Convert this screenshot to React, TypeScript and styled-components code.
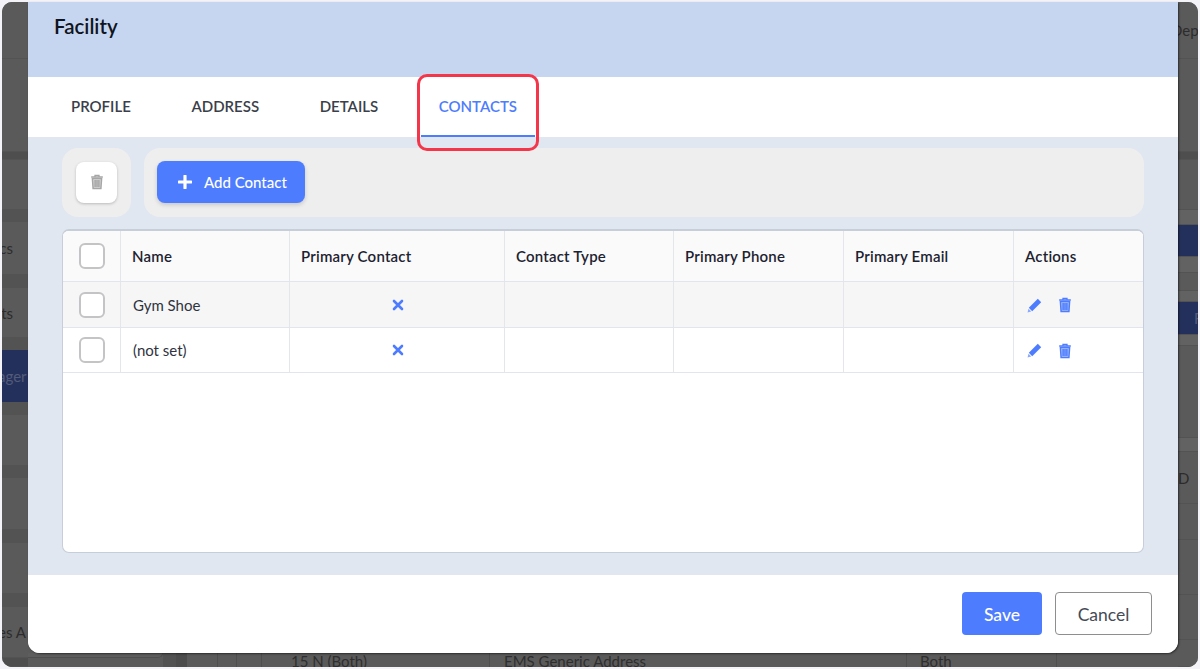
import { createGlobalStyle } from 'styled-components';
import styled from 'styled-components';

const columns = '58px 169px 215px 169px 170px 170px 1fr';

const contacts = [
  { id: '1', name: 'Gym Shoe' },
  { id: '2', name: '(not set)' },
];

const sideRows = [
  { id: 'a', height: 57, label: '', tone: 'plain', inset: 0 },
  { id: 'b', height: 93, label: '', tone: 'plain', inset: 0 },
  { id: 'c', height: 8, label: '', tone: 'dark', inset: 0 },
  { id: 'd', height: 50, label: '', tone: 'plain', inset: 0 },
  { id: 'e', height: 12, label: '', tone: 'band', inset: 0 },
  { id: 'f', height: 53, label: 'ics', tone: 'plain', inset: 21 },
  { id: 'g', height: 13, label: '', tone: 'band', inset: 0 },
  { id: 'h', height: 50, label: 'ts', tone: 'plain', inset: 21 },
  { id: 'i', height: 12, label: '', tone: 'band', inset: 0 },
  { id: 'j', height: 53, label: 'ager', tone: 'navy', inset: 4 },
  { id: 'k', height: 12, label: '', tone: 'band', inset: 0 },
  { id: 'l', height: 51, label: '', tone: 'plain', inset: 0 },
  { id: 'm', height: 12, label: '', tone: 'band', inset: 0 },
  { id: 'n', height: 52, label: '', tone: 'plain', inset: 0 },
  { id: 'o', height: 13, label: '', tone: 'band', inset: 0 },
  { id: 'p', height: 51, label: '', tone: 'plain', inset: 0 },
  { id: 'q', height: 13, label: '', tone: 'band', inset: 0 },
  { id: 'r', height: 51, label: 'es A', tone: 'plain', inset: 4 },
  { id: 's', height: 9, label: '', tone: 'dark', inset: 0 },
];

const rightRows = [
  { id: 'a', height: 57, label: 'Dep', tone: 'plain', inset: 5 },
  { id: 'b', height: 93, label: '', tone: 'plain', inset: 0 },
  { id: 'c', height: 8, label: '', tone: 'dark', inset: 0 },
  { id: 'd', height: 50, label: '', tone: 'plain', inset: 0 },
  { id: 'e', height: 15, label: '', tone: 'mid', inset: 0 },
  { id: 'f', height: 32, label: '', tone: 'navy', inset: 0 },
  { id: 'g', height: 16, label: '', tone: 'mid', inset: 0 },
  { id: 'h', height: 18, label: '', tone: 'plain', inset: 0 },
  { id: 'i', height: 11, label: '', tone: 'mid', inset: 0 },
  { id: 'j', height: 33, label: 'F', tone: 'navy', inset: 28 },
  { id: 'k', height: 11, label: '', tone: 'mid', inset: 0 },
  { id: 'l', height: 92, label: '', tone: 'plain', inset: 0 },
  { id: 'm', height: 14, label: '', tone: 'mid', inset: 0 },
  { id: 'n', height: 52, label: 'D', tone: 'plain', inset: 12 },
  { id: 'o', height: 36, label: '', tone: 'plain', inset: 0 },
  { id: 'p', height: 55, label: '', tone: 'plain', inset: 0 },
  { id: 'q', height: 45, label: '', tone: 'plain', inset: 0 },
  { id: 'r', height: 27, label: '', tone: 'plain', inset: 0 },
];

const peekCells = [
  { id: 'a', width: 31, label: '', inset: 0 },
  { id: 'b', width: 19, label: '', inset: 0 },
  { id: 'c', width: 25, label: '', inset: 0 },
  { id: 'd', width: 228, label: '15 N (Both)', inset: 29 },
  { id: 'e', width: 417, label: 'EMS Generic Address', inset: 14 },
  { id: 'f', width: 150, label: 'Both', inset: 13 },
];

const toneColors: Record<string, string> = {
  plain: '#5a5a5a',
  mid: '#626262',
  band: '#535353',
  dark: '#4e4e4e',
  navy: '#24305c',
};

const GlobalStyle = createGlobalStyle`
  html, body {
    margin: 0;
    padding: 0;
    background: #f3f3f8;
  }
  * {
    box-sizing: border-box;
  }
`;

const Stage = styled.div`
  position: relative;
  width: 1200px;
  height: 669px;
  padding: 2px;
  overflow: hidden;
  font-family: Lato, 'Open Sans', sans-serif;
`;

const Backdrop = styled.div`
  display: flex;
  justify-content: space-between;
  height: 665px;
  border-radius: 10px;
  overflow: hidden;
  background: #5a5a5a;
`;

const SideStrip = styled.div`
  display: flex;
  flex-direction: column;
  width: 32px;
  overflow: hidden;
`;

const LeftStrip = styled(SideStrip)`
  width: 26px;
`;

const StripRow = styled.div<{ $tone: string; $height: number }>`
  flex: none;
  display: flex;
  align-items: center;
  height: ${({ $height }) => $height}px;
  background: ${({ $tone }) => toneColors[$tone]};
  border-bottom: 1px solid #535353;
  color: ${({ $tone }) => ($tone === 'navy' ? '#525b78' : '#2c2c2c')};
  font-size: 15px;
  white-space: nowrap;
  overflow: hidden;
`;

const LeftRow = styled(StripRow)<{ $inset: number }>`
  justify-content: ${({ $inset }) => ($inset > 10 ? 'flex-end' : 'flex-start')};
  padding-right: ${({ $inset }) => ($inset > 10 ? 15 : 0)}px;
  margin-left: ${({ $inset }) => ($inset > 0 && $inset <= 10 ? -$inset : 0)}px;
`;

const RightRow = styled(StripRow)<{ $inset: number }>`
  padding-left: ${({ $inset }) => $inset}px;
`;

const BottomPeek = styled.div`
  position: absolute;
  left: 28px;
  top: 653px;
  width: 1150px;
  height: 14px;
  display: flex;
  overflow: hidden;
  background: #5a5a5a;
`;

const PeekPanel = styled.div`
  flex: none;
  width: 135px;
  height: 5px;
  background: #5d5d5d;
  border-right: 1px solid #4e4e4e;
  border-bottom: 1px solid #4e4e4e;
  border-radius: 0 0 6px 0;
`;

const PeekGutter = styled.div`
  flex: none;
  width: 13px;
  background: #525252;
`;

const PeekRail = styled.div`
  flex: none;
  width: 11px;
  background: #4c4c4c;
`;

const PeekCell = styled.div<{ $width: number; $inset: number }>`
  flex: none;
  width: ${({ $width }) => $width}px;
  padding-left: ${({ $inset }) => $inset}px;
  border-right: 1px solid #4e4e4e;
  color: #2e2e2e;
  font-size: 15px;
  line-height: 16px;
  white-space: nowrap;
`;

const Modal = styled.div`
  position: absolute;
  left: 28px;
  top: 2px;
  width: 1150px;
  height: 651px;
  display: flex;
  flex-direction: column;
  background: #fff;
  border-radius: 0 0 12px 12px;
  box-shadow: 1px 1px 2px rgba(0, 0, 0, 0.5);
  overflow: hidden;
`;

const ModalHeader = styled.div`
  height: 75px;
  flex: none;
  padding: 12px 26px;
  background: #c6d6f0;
  color: #0f1420;
  font-size: 20.5px;
  line-height: 24px;
  font-weight: 600;
`;

const TabBar = styled.div`
  height: 60px;
  flex: none;
  display: flex;
  padding-left: 25px;
  background: #fff;
`;

const Tab = styled.div<{ $active?: boolean }>`
  height: 60px;
  display: flex;
  align-items: center;
  padding: 0 18px;
  margin-right: 24.6px;
  color: ${({ $active }) => ($active ? '#4d7cfe' : '#3a3f4a')};
  border-bottom: 2px solid ${({ $active }) => ($active ? '#4d7cfe' : 'transparent')};
  font-size: 15px;
  font-weight: 600;
`;

const Highlight = styled.div`
  position: absolute;
  left: 417px;
  top: 74px;
  width: 122px;
  height: 77px;
  border: 3px solid #f4364a;
  border-radius: 10px;
  pointer-events: none;
`;

const Body = styled.div`
  flex: 1;
  display: flex;
  flex-direction: column;
  gap: 12px;
  padding: 11px 34px 22px;
  background: #e1e7f0;
`;

const Toolbars = styled.div`
  display: flex;
  gap: 13px;
`;

const ToolGroup = styled.div<{ $grow?: boolean }>`
  height: 69px;
  display: flex;
  align-items: center;
  flex: ${({ $grow }) => ($grow ? 1 : 'none')};
  padding: 0 13px 1px;
  background: #eeeeee;
  border-radius: 16px;
`;

const TrashGroup = styled(ToolGroup)`
  padding: 0 14px 1px;
`;

const IconButton = styled.button`
  width: 41px;
  height: 41px;
  display: flex;
  align-items: center;
  justify-content: center;
  padding: 0;
  border: none;
  border-radius: 8px;
  background: #fff;
  box-shadow: 0 1px 3px rgba(0, 0, 0, 0.22);
`;

const AddButton = styled.button`
  width: 148px;
  height: 42px;
  display: flex;
  align-items: center;
  gap: 12px;
  padding: 0 0 0 21px;
  border: none;
  border-radius: 8px;
  background: #4d7cfe;
  color: #fff;
  font-family: inherit;
  font-size: 15px;
  font-weight: 500;
  box-shadow: 0 2px 4px rgba(0, 0, 0, 0.16);
`;

const Table = styled.div`
  flex: 1;
  background: #fff;
  border: 1px solid #c6ced9;
  border-top-width: 2px;
  border-radius: 7px;
  overflow: hidden;
`;

const rowHeights = { head: 51, odd: 46, even: 45 };

const Row = styled.div<{ $kind: 'head' | 'odd' | 'even' }>`
  display: grid;
  grid-template-columns: ${columns};
  height: ${({ $kind }) => rowHeights[$kind]}px;
  background: ${({ $kind }) =>
    $kind === 'head' ? '#fafafa' : $kind === 'odd' ? '#f6f6f6' : '#fff'};
  border-bottom: 1px solid #e2e5ee;
`;

const Cell = styled.div<{ $head?: boolean; $center?: boolean }>`
  display: flex;
  align-items: center;
  justify-content: ${({ $center }) => ($center ? 'center' : 'flex-start')};
  padding: ${({ $center }) => ($center ? '0 10px 0 12px' : '0 11px')};
  border-right: 1px solid #e4e6ea;
  color: ${({ $head }) => ($head ? '#1d2230' : '#2f3340')};
  font-size: 15px;
  font-weight: ${({ $head }) => ($head ? 600 : 400)};
  letter-spacing: ${({ $head }) => ($head ? '0.2px' : '0')};

  &:last-child {
    border-right: none;
  }
`;

const CheckCell = styled(Cell)`
  justify-content: center;
  padding: 0 0 0 1px;
`;

const NameCell = styled(Cell)<{ $head?: boolean }>`
  padding-left: ${({ $head }) => ($head ? 11 : 12)}px;
`;

const ActionGroup = styled.div`
  display: flex;
  align-items: center;
  gap: 15px;
  padding: 1px 0 0 2px;
`;

const Check = styled.span`
  width: 26px;
  height: 26px;
  background: #fff;
  border: 2px solid #c4c4c6;
  border-radius: 6px;
`;

const Footer = styled.div`
  height: 78px;
  flex: none;
  display: flex;
  justify-content: flex-end;
  align-items: center;
  gap: 13px;
  padding: 0 26px 1px 0;
  background: #fff;
`;

const SaveButton = styled.button`
  width: 80px;
  height: 43px;
  padding: 2px 0 0;
  border: none;
  border-radius: 4px;
  background: #4d7cfe;
  color: #fff;
  font-family: inherit;
  font-size: 17.5px;
  font-weight: 500;
`;

const CancelButton = styled.button`
  width: 97px;
  height: 43px;
  padding: 2px 0 0;
  border: 1px solid #8e8e8e;
  border-radius: 4px;
  background: #fff;
  color: #454b57;
  font-family: inherit;
  font-size: 17.5px;
`;

const TrashIcon = ({ color }: { color: string }) => (
  <svg width="16" height="16" viewBox="0 0 16 16" fill="none">
    <path d="M2.2 3h11.6M6 3V1.4h4V3" stroke={color} strokeWidth="1.3" />
    <path
      d="M3.4 4.4h9.2l-.7 10.2H4.1zM6.1 6v7M8 6v7M9.9 6v7"
      stroke={color}
      strokeWidth="1.5"
      fill={color}
      fillOpacity="0.45"
    />
  </svg>
);

const PencilIcon = () => (
  <svg width="15" height="15" viewBox="0 0 15 15">
    <path d="M10.8 0.8l3.4 3.4-9 9-3.4-3.4z" fill="#4d7cfe" />
    <path d="M1.4 10.8l2.8 2.8-3.6.8z" fill="#8ba8fd" />
  </svg>
);

const CrossIcon = () => (
  <svg width="12" height="12" viewBox="0 0 12 12">
    <path d="M2 2l8 8M10 2l-8 8" stroke="#4d7cfe" strokeWidth="2.6" strokeLinecap="round" />
  </svg>
);

const PlusIcon = () => (
  <svg width="14" height="14" viewBox="0 0 14 14">
    <path d="M7 1v12M1 7h12" stroke="#fff" strokeWidth="3.2" strokeLinecap="round" />
  </svg>
);

const App = () => {
  return (
    <>
      <GlobalStyle />
      <Stage>
        <Backdrop>
          <LeftStrip>
            {sideRows.map((row) => (
              <LeftRow key={row.id} $tone={row.tone} $height={row.height} $inset={row.inset}>
                {row.label}
              </LeftRow>
            ))}
          </LeftStrip>
          <SideStrip>
            {rightRows.map((row) => (
              <RightRow key={row.id} $tone={row.tone} $height={row.height} $inset={row.inset}>
                {row.label}
              </RightRow>
            ))}
          </SideStrip>
        </Backdrop>
        <BottomPeek>
          <PeekPanel />
          <PeekGutter />
          <PeekRail />
          {peekCells.map((cell) => (
            <PeekCell key={cell.id} $width={cell.width} $inset={cell.inset}>
              {cell.label}
            </PeekCell>
          ))}
        </BottomPeek>
        <Modal>
          <ModalHeader>Facility</ModalHeader>
          <TabBar>
            <Tab>PROFILE</Tab>
            <Tab>ADDRESS</Tab>
            <Tab>DETAILS</Tab>
            <Tab $active>CONTACTS</Tab>
          </TabBar>
          <Body>
            <Toolbars>
              <TrashGroup>
                <IconButton aria-label="Delete">
                  <TrashIcon color="#a6a6a6" />
                </IconButton>
              </TrashGroup>
              <ToolGroup $grow>
                <AddButton>
                  <PlusIcon />
                  Add Contact
                </AddButton>
              </ToolGroup>
            </Toolbars>
            <Table>
              <Row $kind="head">
                <CheckCell $head>
                  <Check />
                </CheckCell>
                <NameCell $head>Name</NameCell>
                <Cell $head>Primary Contact</Cell>
                <Cell $head>Contact Type</Cell>
                <Cell $head>Primary Phone</Cell>
                <Cell $head>Primary Email</Cell>
                <Cell $head>Actions</Cell>
              </Row>
              {contacts.map((contact, index) => (
                <Row key={contact.id} $kind={index % 2 === 0 ? 'odd' : 'even'}>
                  <CheckCell>
                    <Check />
                  </CheckCell>
                  <NameCell>{contact.name}</NameCell>
                  <Cell $center>
                    <CrossIcon />
                  </Cell>
                  <Cell />
                  <Cell />
                  <Cell />
                  <Cell>
                    <ActionGroup>
                      <PencilIcon />
                      <TrashIcon color="#4d7cfe" />
                    </ActionGroup>
                  </Cell>
                </Row>
              ))}
            </Table>
          </Body>
          <Footer>
            <SaveButton>Save</SaveButton>
            <CancelButton>Cancel</CancelButton>
          </Footer>
        </Modal>
        <Highlight />
      </Stage>
    </>
  );
};

export default App;
